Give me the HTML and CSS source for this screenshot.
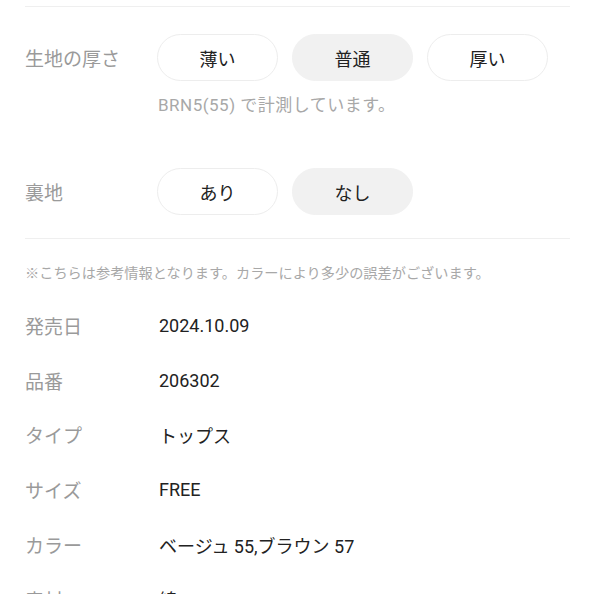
FILE: index.html
```html
<!DOCTYPE html>
<html lang="ja">
<head>
    <meta charset="UTF-8">
    <meta name="viewport" content="width=device-width, initial-scale=1.0">
    <title>商品詳細</title>
    <link rel="stylesheet" href="styles.css">
</head>
<body>
    <div class="container">
        <div class="divider top"></div>

        <!-- 生地の厚さ -->
        <div class="option-row">
            <div class="label">生地の厚さ</div>
            <div class="pills">
                <span class="pill">薄い</span>
                <span class="pill active">普通</span>
                <span class="pill">厚い</span>
            </div>
        </div>
        <p class="option-note">BRN5(55) で計測しています。</p>

        <!-- 裏地 -->
        <div class="option-row lining">
            <div class="label">裏地</div>
            <div class="pills">
                <span class="pill">あり</span>
                <span class="pill active">なし</span>
            </div>
        </div>

        <div class="divider"></div>

        <p class="ref-note">※こちらは参考情報となります。カラーにより多少の誤差がございます。</p>

        <!-- Spec table -->
        <dl class="specs">
            <div class="spec"><dt>発売日</dt><dd>2024.10.09</dd></div>
            <div class="spec"><dt>品番</dt><dd>206302</dd></div>
            <div class="spec"><dt>タイプ</dt><dd>トップス</dd></div>
            <div class="spec"><dt>サイズ</dt><dd>FREE</dd></div>
            <div class="spec"><dt>カラー</dt><dd>ベージュ 55,ブラウン 57</dd></div>
            <div class="spec"><dt>素材</dt><dd>綿100%</dd></div>
        </dl>
    </div>
</body>
</html>
```

FILE: styles.css
```css
/* Reset */
* {
    margin: 0;
    padding: 0;
    box-sizing: border-box;
}

body {
    font-family: Roboto, "Noto Sans CJK JP", sans-serif;
    background-color: #fff;
    color: #222;
}

.container {
    padding: 0 24px 0 25px;
}

/* Dividers */
.divider {
    height: 1px;
    background-color: #efefef;
}

.divider.top {
    margin-top: 6px;
}

/* Option rows */
.option-row {
    display: flex;
    align-items: center;
    margin-top: 27px;
}

.option-row.lining {
    margin-top: 51px;
    margin-bottom: 23px;
}

.label {
    width: 132px;
    font-size: 19px;
    color: #9a9a9a;
}

.pills {
    display: flex;
    gap: 14px;
}

.pill {
    width: 121px;
    height: 47px;
    border: 1px solid #ededed;
    border-radius: 24px;
    display: flex;
    align-items: center;
    justify-content: center;
    font-size: 18px;
    color: #222;
}

.pill.active {
    background-color: #f1f1f1;
    border-color: #f1f1f1;
}

.option-note {
    margin: 12px 0 0 133px;
    font-size: 17px;
    line-height: 24px;
    letter-spacing: 0.5px;
    color: #a8a8a8;
}

/* Reference note */
.ref-note {
    margin-top: 24px;
    font-size: 14.2px;
    line-height: 20px;
    color: #a8a8a8;
}

/* Specs */
.specs {
    margin-top: 15px;
}

.spec {
    display: flex;
    align-items: center;
    height: 54.8px;
}

.spec dt {
    width: 134px;
    font-size: 19px;
    color: #9a9a9a;
}

.spec dd {
    font-size: 18px;
    color: #222;
}
```
